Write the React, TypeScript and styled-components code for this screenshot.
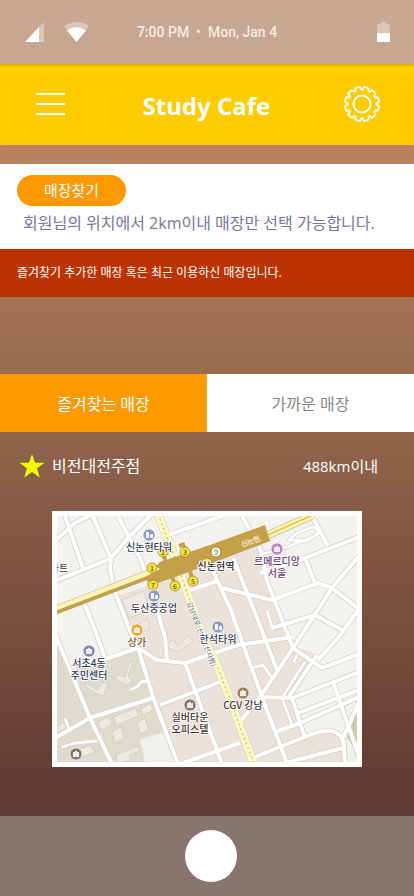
import React from "react";
import styled, { createGlobalStyle } from "styled-components";

const GlobalStyle = createGlobalStyle`
  *, *::before, *::after { box-sizing: border-box; }
  body {
    margin: 0;
    font-family: "Open Sans", "Noto Sans CJK KR", sans-serif;
    background: #5f3d33;
  }
  button { font: inherit; border: 0; padding: 0; cursor: pointer; }
`;

const Screen = styled.div`
  min-height: 100vh;
  display: flex;
  flex-direction: column;
  background: linear-gradient(180deg, #ce9368 0, #b9835e 150px, #5f3d33 790px);
`;

const StatusBar = styled.div`
  height: 64px;
  padding: 0 24px;
  display: grid;
  grid-template-columns: 1fr auto 1fr;
  align-items: center;
  background: rgba(198, 198, 198, 0.45);
  color: #f3ebe6;
  font: 500 14px/20px Roboto, sans-serif;
`;

const StatusIcons = styled.div<{ $end?: boolean }>`
  display: flex;
  gap: 20px;
  justify-content: ${(p) => (p.$end ? "flex-end" : "flex-start")};
`;

const Header = styled.header`
  height: 81px;
  padding: 0 33px 1px 32px;
  display: flex;
  align-items: center;
  justify-content: space-between;
  background: #ffcc00;
  color: #fff;
  box-shadow: inset 0 3px 3px -2px rgba(120, 80, 0, 0.4);
`;

const IconButton = styled.button`
  display: flex;
  background: none;
  color: #fff;
`;

const Title = styled.h1`
  margin: 4px 0 0;
  font: 700 24px/32px "Noto Sans", sans-serif;
`;

const SearchPanel = styled.section`
  margin-top: 19px;
  padding: 11px 17px 12px;
  background: #fff;
`;

const SearchButton = styled.button`
  width: 109px;
  height: 31px;
  border-radius: 16px;
  display: block;
  background: #ff9900;
  color: #fff;
  font-size: 15px;
  line-height: 31px;
`;

const SearchText = styled.p`
  margin: 4px 0 0 6px;
  color: #7777a1;
  font-size: 16px;
  line-height: 27px;
`;

const Notice = styled.p`
  margin: 0;
  padding: 12px 17px;
  background: #bb3300;
  color: #fff;
  font-size: 12px;
  line-height: 24px;
`;

const Tabs = styled.div`
  margin-top: 77px;
  display: flex;
`;

const Tab = styled.button<{ $active?: boolean }>`
  flex: 1;
  height: 58px;
  background: ${(p) => (p.$active ? "#ff9900" : "#ffffff")};
  color: ${(p) => (p.$active ? "#ffffff" : "#888888")};
  font-size: 16px;
`;

const StoreRow = styled.div`
  padding: 20px 36px 0 19px;
  display: flex;
  align-items: center;
  color: #fff;
  font-size: 16px;
  line-height: 28px;
`;

const StoreName = styled.span`
  flex: 1;
  margin-left: 7px;
`;

const Distance = styled.span`
  font-size: 15px;
`;

const MapFrame = styled.figure`
  margin: 31px 52px 49px;
  border: 5px solid #fff;
  display: flex;
  svg { width: 100%; height: auto; display: block; }
`;

const BottomBar = styled.nav`
  margin-top: auto;
  height: 80px;
  padding-left: 8px;
  display: flex;
  align-items: center;
  justify-content: center;
  background: #89756d;
`;

const HomeButton = styled.button`
  width: 52px;
  height: 52px;
  border-radius: 50%;
  background: #fff;
`;

function gearPath(teeth: number, outer: number, inner: number) {
  const step = (Math.PI * 2) / teeth;
  const at = (r: number, a: number) =>
    `${(19 + r * Math.sin(a)).toFixed(2)} ${(19 - r * Math.cos(a)).toFixed(2)}`;
  let d = "";
  for (let i = 0; i < teeth; i++) {
    const a = i * step;
    d += `${i ? "L" : "M"}${at(inner, a - step * 0.12)}`;
    d += `Q${at(inner - 0.6, a)} ${at(inner, a + step * 0.12)}`;
    d += `L${at(outer - 1, a + step * 0.16)}`;
    d += `Q${at(outer + 0.2, a + step * 0.2)} ${at(outer, a + step * 0.36)}`;
    d += `L${at(outer, a + step * 0.64)}`;
    d += `Q${at(outer + 0.2, a + step * 0.8)} ${at(outer - 1, a + step * 0.84)}`;
  }
  return d + "Z";
}

const roads = [
  "M8 0L26 52", "M0 23L18 7L36 -2", "M36 0L54 43L53 52L57 73L73 115L81 132L96 181L121 248",
  "M-2 65L53 43L71 22L95 -2", "M61 0L83 42L92 65L108 122L110 144", "M28 89L41 122L48 142",
  "M-2 118L33 202L55 248", "M36 147L81 132L100 144L128 147L181 129",
  "M-2 222L33 202L96 182", "M103 189L163 166", "M128 147L165 248",
  "M126 247L183 227", "M111 19L168 -1",
  "M185 0L203 32L210 65L236 132", "M176 42L195 89L220 154",
  "M156 55L173 92L205 181L230 247", "M130 75L161 65",
  "M165 72L215 84L261 67L275 72L302 93L281 122L261 144",
  "M255 0L271 30", "M203 57L248 42L302 21", "M248 42L258 67",
  "M302 40L275 72L236 132L203 181L183 206",
  "M215 112L258 99L285 114", "M236 132L265 152L302 138",
  "M181 129L236 121", "M260 139L231 182", "M203 181L235 182L302 156",
  "M235 182L248 222", "M218 216L243 207L302 181", "M241 197L302 174",
  "M276 166L291 209L302 240", "M302 186L286 222",
  "M198 241L245 222Q268 212 278 216Q286 220 287 230L288 247", "M228 247L286 232",
];

const lanes = [
  "M195 152L206 149L215 162", "M210 95L216 114", "M248 146L225 182L235 209",
  "M73 174L80 171L84 166L90 165", "M5 231L18 227L40 225", "M8 202L13 216",
  "M205 38L230 31L258 20Q265 12 255 11L240 17L232 24L250 25L262 17", "M240 139L237 146",
];

const buildings = [
  "M65 84L86 75L94 94L72 102Z", "M80 109L91 103L93 113L83 117Z",
  "M73 146L77 145L71 160L75 165L71 170L58 163L60 159L68 161Z",
  "M28 166L40 174L45 166L51 168L46 180L38 177L29 171Z",
  "M41 206L52 201L55 209L44 214Z", "M56 201L79 192L82 200L60 209Z",
  "M84 193L93 187L97 194L86 199Z", "M55 215L64 211L67 223L58 227Z",
  "M80 206L88 202L92 214L83 218Z", "M59 239L81 230L83 235L72 239L74 244L60 247Z",
  "M0 211L8 206L9 212L0 217Z", "M110 127L117 124L121 130L131 119L136 125L122 136L113 133Z",
  "M14 236L34 229L38 236L23 242Z", "M40 218L46 216L50 236L44 236Z",
];

type Exit = [number, number, string];
const exits: Exit[] = [
  [95, 52, "1"], [106, 36, "2"], [128, 36, "3"], [136, 65, "5"],
  [118, 70, "6"], [96, 69, "7"], [150, 47, ""],
];

type Place = { x: number; y: number; color: string; mark: "tower" | "box"; text: string; lines: string[] };
const places: Place[] = [
  { x: 92, y: 19, color: "#8f9bc0", mark: "tower", text: "#343b58", lines: ["신논현타워"] },
  { x: 97, y: 80, color: "#8f9bc0", mark: "tower", text: "#343b58", lines: ["두산중공업"] },
  { x: 161, y: 111, color: "#8f9bc0", mark: "tower", text: "#343b58", lines: ["한석타워"] },
  { x: 220, y: 33, color: "#c27fc6", mark: "box", text: "#6c3a76", lines: ["르메르디앙", "서울"] },
  { x: 80, y: 114, color: "#f2a52e", mark: "box", text: "#80541c", lines: ["상가"] },
  { x: 32, y: 135, color: "#7e8cb5", mark: "box", text: "#343b58", lines: ["서초4동", "주민센터"] },
  { x: 133, y: 189, color: "#85776f", mark: "box", text: "#40342f", lines: ["실버타운", "오피스텔"] },
  { x: 186, y: 177, color: "#a28456", mark: "box", text: "#443830", lines: ["CGV 강남"] },
  { x: 19, y: 238, color: "#85776f", mark: "box", text: "#40342f", lines: [] },
];

const boulevard = "M101 -2L118 42L146 122L160 149L197 248";

function StoreMap() {
  return (
    <svg viewBox="0 0 300 246" role="img" aria-label="매장 위치 지도"
      fontFamily='"Noto Sans CJK KR", sans-serif' fontSize="10" fontWeight="400" textAnchor="middle">
      <rect width="300" height="246" fill="#f4f2ee" />
      <path fill="#ebe2dc" d="M63 79L100 66L190 30L203 32L212 65L236 130L262 139L235 182L248 222L275 214L286 222L288 246H121L96 181L81 132L73 115Z" />
      <path fill="#dedccf" d="M0 122L25 185L18 147L36 147L81 132L96 181L118 246H0Z" />
      <path fill="#f2f0ea" d="M83 223L109 216L121 246H88Z" />
      <path fill="#c7d0a9" d="M300 193L290 222L300 236Z" />
      <g fill="#eee9e1" stroke="#cfc8be" strokeWidth="0.7">
        {buildings.map((d) => <path key={d} d={d} />)}
      </g>
      <g fill="none" strokeLinejoin="round">
        <g stroke="#d2cec9">
          {lanes.map((d) => <path key={d} d={d} strokeWidth="4" />)}
          {roads.map((d) => <path key={d} d={d} strokeWidth="5.5" />)}
          <path d={boulevard} strokeWidth="9" />
        </g>
        <g stroke="#fff">
          {lanes.map((d) => <path key={d} d={d} strokeWidth="2.8" />)}
          {roads.map((d) => <path key={d} d={d} strokeWidth="4" />)}
        </g>
        <path d={boulevard} stroke="#fbf7c3" strokeWidth="8" />
        <path d={boulevard} stroke="#b9ad6c" strokeWidth="1" strokeDasharray="2 3" />
        <path d="M-2 94L103 53M209 20L256 -1" stroke="#cbc193" strokeWidth="8" />
        <path d="M-2 94L103 53M209 20L256 -1" stroke="#fcf5ba" strokeWidth="6.5" />
        <path d="M211 19L258 -2" stroke="#e7c441" strokeWidth="1.6" />
      </g>
      <path fill="#c4a04b" d="M-2 95L90 60L103 53L99 50L103 46L153 29L208 9L213 25L153 48L118 61L92 70L90 64L-2 99Z" />
      <path d="M106 36L110 52M128 30L124 48M136 65L132 52M118 70L114 57M122 30L128 28" stroke="#c4a04b" strokeWidth="4" />
      <text x="193" y="28" fontSize="7" fill="#dcc283" stroke="#e7d5a6" strokeWidth="0.8" transform="rotate(-20 193 24)">신논현</text>
      {exits.map(([x, y, n]) => (
        <g key={`${x}-${y}`}>
          <circle cx={x} cy={y} r="5" fill="#f6df3f" stroke="#9c8228" strokeWidth="0.7" />
          {n && <text x={x} y={y + 3} fontSize="7" fill="#4f4318">{n}</text>}
        </g>
      ))}
      <circle cx="159" cy="36" r="5" fill="#fff" stroke="#b08c31" strokeWidth="1" />
      <text x="159" y="39" fontSize="8" fill="#96752a">9</text>
      <text x="145" y="121" fontSize="7" fill="#5b625e" stroke="#fff" strokeWidth="1.5" paintOrder="stroke" transform="rotate(69 145 118)">강남대로(신분당선사평)</text>
      <g stroke="#fff" strokeWidth="2" strokeLinejoin="round" paintOrder="stroke">
        <text x="159" y="54" fill="#2d2b2b" fontWeight="500">신논현역</text>
        <text x="2" y="56" fill="#40342f">마트</text>
      </g>
      {places.map((p) => (
        <g key={`${p.x}-${p.y}`}>
          <circle cx={p.x} cy={p.y} r="6" fill={p.color} stroke="#fff" strokeWidth="0.6" />
          {p.mark === "tower" ? (
            <path d={`M${p.x - 3} ${p.y + 3}v-6h3v6zM${p.x + 1} ${p.y + 3}v-4h3v4z`} fill="#edf0f8" />
          ) : (
            <path d={`M${p.x - 3} ${p.y - 2}h6v5h-6zM${p.x - 1} ${p.y - 3}h2v1h-2z`} fill="#fff" fillOpacity="0.85" />
          )}
          {p.lines.map((line, i) => (
            <text key={line} x={p.x} y={p.y + 16 + i * 12} fill={p.text} stroke="#fff" strokeWidth="1.6"
              strokeLinejoin="round" paintOrder="stroke" fontWeight="500">{line}</text>
          ))}
        </g>
      ))}
    </svg>
  );
}

export default function App() {
  return (
    <>
      <GlobalStyle />
      <Screen>
        <StatusBar>
          <StatusIcons>
            <svg width="20" height="20" viewBox="0 0 20 20" aria-hidden="true">
              <path d="M15 5L20 0V20H15Z" fill="#fff" fillOpacity="0.35" />
              <path d="M1 20L15 5V20Z" fill="#fff" />
            </svg>
            <svg width="25" height="20" viewBox="0 0 25 20" aria-hidden="true">
              <path d="M0 4Q12.500 -4 25 4L21.500 8.500Q12.500 2 3.500 8.500Z" fill="#fff" fillOpacity="0.35" />
              <path d="M3 8.500Q12.500 1.500 22 8.500L12.500 20Z" fill="#fff" />
            </svg>
          </StatusIcons>
          <span>7:00 PM&nbsp; •&nbsp; Mon, Jan 4</span>
          <StatusIcons $end>
            <svg width="13" height="20" viewBox="0 0 13 20" aria-hidden="true">
              <path d="M0 2H4V0H9V2H13V11H0Z" fill="#fff" fillOpacity="0.35" />
              <path d="M0 11H13V20H0Z" fill="#fff" />
            </svg>
          </StatusIcons>
        </StatusBar>
        <Header>
          <IconButton aria-label="메뉴">
            <svg width="38" height="38" viewBox="0 0 38 38" fill="none" stroke="currentColor" strokeWidth="2">
              <path d="M4 9H33M4 19H33M4 29H33" />
            </svg>
          </IconButton>
          <Title>Study Cafe</Title>
          <IconButton aria-label="설정">
            <svg width="38" height="38" viewBox="0 0 38 38" fill="none" stroke="currentColor" strokeWidth="1.800" strokeLinejoin="round">
              <path d={gearPath(12, 17.2, 14.6)} />
              <circle cx="19" cy="19" r="8.500" />
            </svg>
          </IconButton>
        </Header>
        <main>
          <SearchPanel>
            <SearchButton>매장찾기</SearchButton>
            <SearchText>회원님의 위치에서 2km이내 매장만 선택 가능합니다.</SearchText>
          </SearchPanel>
          <Notice>즐겨찾기 추가한 매장 혹은 최근 이용하신 매장입니다.</Notice>
          <Tabs role="tablist">
            <Tab $active role="tab" aria-selected="true">즐겨찾는 매장</Tab>
            <Tab role="tab" aria-selected="false">가까운 매장</Tab>
          </Tabs>
          <StoreRow>
            <svg width="26" height="26" viewBox="0 0 26 26" aria-hidden="true">
              <path d="M13 1L16 9.800H25.500L18 15.400L20.800 24.500L13 19L5.200 24.500L8 15.400L0.500 9.800H10Z" fill="#eeff00" />
            </svg>
            <StoreName>비전대전주점</StoreName>
            <Distance>488km이내</Distance>
          </StoreRow>
          <MapFrame>
            <StoreMap />
          </MapFrame>
        </main>
        <BottomBar>
          <HomeButton aria-label="홈" />
        </BottomBar>
      </Screen>
    </>
  );
}
